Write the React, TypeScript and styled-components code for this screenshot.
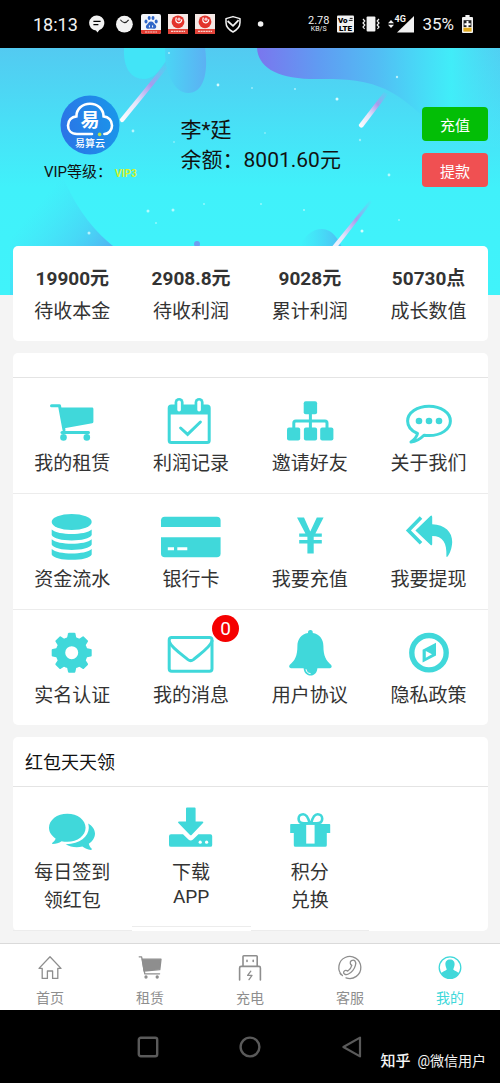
import React from 'react';
import styled, { createGlobalStyle } from 'styled-components';

const TEAL = '#40d8da';
const GREY = '#8e8e8e';

const GlobalStyle = createGlobalStyle`
  *, *::before, *::after { box-sizing: border-box; }
  body {
    margin: 0;
    background: #f4f4f4;
    color: #333;
    font-family: Roboto, "Noto Sans CJK SC", sans-serif;
  }
  a { color: inherit; text-decoration: none; }
  svg { display: block; flex: none; overflow: visible; }
`;

const Page = styled.div`
  display: flex;
  flex-direction: column;
  min-height: 100vh;
`;

/* ---------- status bar ---------- */

const StatusBar = styled.div`
  display: flex;
  align-items: center;
  justify-content: space-between;
  height: 48px;
  padding: 0 27px 0 33px;
  background: #000;
  color: #f2f2f2;
`;

const StatusLeft = styled.div`
  display: flex;
  align-items: center;
  gap: 7px;
`;

const StatusRight = styled.div`
  display: flex;
  align-items: center;
  gap: 8px;
`;

const Clock = styled.time`
  width: 47px;
  font-size: 18px;
`;

const Battery = styled.span`
  font-size: 17px;
`;

const Speed = styled.span`
  display: flex;
  flex-direction: column;
  align-items: center;
  font-size: 11px;
  line-height: 10px;
`;

const SpeedUnit = styled.small`
  font-size: 7px;
  line-height: 7px;
`;

/* ---------- profile ---------- */

const Hero = styled.header`
  position: relative;
  height: 247px;
  background: linear-gradient(#53caf1 0, #47e2f7 84px, #40f1fa 140px, #40f3fa 100%);
  overflow: hidden;
`;

const Backdrop = styled.svg`
  position: absolute;
  inset: 0;
  width: 100%;
  height: 100%;
`;

const Profile = styled.div`
  position: relative;
  display: flex;
  padding-right: 12px;
  color: #111;
`;

const Member = styled.div`
  display: flex;
  flex-direction: column;
  align-items: center;
  gap: 5px;
  width: 37%;
  padding-top: 47px;
`;

const Level = styled.div`
  font-size: 15px;
`;

const LevelValue = styled.strong`
  margin-left: 3px;
  color: #d5f32c;
  font-size: 10px;
`;

const Account = styled.div`
  flex: 1;
  padding-top: 67px;
  font-size: 21px;
  line-height: 30px;
`;

const Actions = styled.div`
  display: flex;
  flex-direction: column;
  gap: 12px;
  padding-top: 59px;
`;

const ActionButton = styled.button<{ $color: string }>`
  width: 66px;
  height: 34px;
  padding: 0;
  border: 0;
  border-radius: 4px;
  background: ${(p) => p.$color};
  color: #fff;
  font: inherit;
  font-size: 15px;
`;

/* ---------- cards ---------- */

const Main = styled.main`
  display: flex;
  flex: 1;
  flex-direction: column;
  gap: 12px;
  margin-top: -49px;
  padding: 0 12px 12px 13px;
`;

const Card = styled.section`
  border-radius: 5px;
  background: #fff;
  z-index: 1;
`;

const Stats = styled.dl`
  display: grid;
  grid-template-columns: repeat(4, 1fr);
  margin: 0;
  padding: 19px 0 15px;
  font-size: 19px;
  line-height: 28px;
  text-align: center;
`;

const Stat = styled.div`
  display: flex;
  flex-direction: column-reverse;
  gap: 5px;
`;

const StatName = styled.dt``;

const StatValue = styled.dd`
  margin: 0;
  font-weight: 700;
`;

const CardHead = styled.h2<{ $empty?: boolean }>`
  height: ${(p) => (p.$empty ? '25px' : '50px')};
  margin: 0;
  padding: 0 12px;
  border-bottom: 1px solid #e4e4e4;
  color: #111;
  font-size: 18px;
  font-weight: 400;
  line-height: 52px;
`;

const Grid = styled.div`
  display: grid;
  grid-template-columns: repeat(4, 1fr);
  align-items: start;
`;

const Item = styled.a`
  display: flex;
  flex-direction: column;
  align-items: center;
  padding: 19px 0 18px;
  border-bottom: 1px solid #ececec;
  font-size: 19px;
  text-align: center;
`;

const ServiceCard = styled(Card)`
  ${Item}:nth-last-child(-n + 4) { border-bottom: 0; }
`;

const Picture = styled.span`
  position: relative;
  height: 50px;
`;

const Badge = styled.span`
  position: absolute;
  top: -14px;
  right: -18px;
  width: 27px;
  height: 27px;
  border-radius: 50%;
  background: #f50000;
  color: #fff;
  font-size: 19px;
  line-height: 27px;
`;

const ItemLine = styled.span`
  display: block;
  padding-top: 1px;
`;

const Line = styled.span`
  display: block;
`;

/* ---------- bottom bars ---------- */

const TabBar = styled.nav`
  display: grid;
  grid-template-columns: repeat(5, 1fr);
  height: 67px;
  border-top: 1px solid #dadada;
  background: #fff;
`;

const Tab = styled.a<{ $active?: boolean }>`
  && { color: ${(p) => (p.$active ? TEAL : GREY)}; }
  display: flex;
  flex-direction: column;
  align-items: center;
  gap: 7px;
  padding-top: 11px;
  font-size: 14px;
  line-height: 20px;
`;

const SystemBar = styled.footer`
  position: relative;
  display: flex;
  align-items: center;
  justify-content: center;
  gap: 80px;
  height: 73px;
  background: #000;
`;

const SystemButton = styled.button`
  width: 22px;
  height: 22px;
  padding: 0;
  border: 0;
  background: none;
`;

const Watermark = styled.span`
  position: absolute;
  right: 14px;
  bottom: 11px;
  color: #f4f4f4;
  font-size: 14px;
  line-height: 22px;
`;

const WatermarkBrand = styled.b`
  margin-right: 7px;
  font-size: 15px;
  font-weight: 500;
`;

/* ---------- drawings ---------- */

const Glyph = ({ children }: { children: React.ReactNode }) => (
  <svg width="60" height="50" viewBox="0 0 60 50" fill={TEAL} aria-hidden="true">{children}</svg>
);

const outline = { fill: 'none', stroke: TEAL, strokeWidth: 3, strokeLinejoin: 'round', strokeLinecap: 'round' } as const;

const CartIcon = () => (
  <Glyph>
    <path d="M9.5 8.8H17.5L22 33" {...outline} />
    <path d="M17.5 10.6H50.2Q51.4 10.6 51.4 12V24.8Q51.4 26 50.2 26.2L21 31.4Z" />
    <path d="M20 35.6H46.5" {...outline} />
    <circle cx="21.5" cy="40.4" r="3.3" />
    <circle cx="44.8" cy="40.4" r="3.3" />
  </Glyph>
);

const CalendarIcon = () => (
  <Glyph>
    <rect x="8.2" y="9" width="40" height="36.5" rx="2" {...outline} />
    <path d="M8 9H48V17.4H8Z" />
    <rect x="13.6" y="1" width="9" height="14.6" rx="4.5" />
    <rect x="33.6" y="1" width="9" height="14.6" rx="4.5" />
    <rect x="16.3" y="3.6" width="3.6" height="11" rx="1.8" fill="#fff" />
    <rect x="36.3" y="3.6" width="3.6" height="11" rx="1.8" fill="#fff" />
    <path d="M19.6 31L26.6 37.4L39.4 25" {...outline} strokeLinejoin="miter" />
  </Glyph>
);

const SitemapIcon = () => (
  <Glyph>
    <rect x="23.7" y="4.2" width="13.4" height="13" rx="2" />
    <rect x="7" y="30.4" width="13.2" height="13.2" rx="2" />
    <rect x="23.9" y="30.4" width="13.2" height="13.2" rx="2" />
    <rect x="40.2" y="30.4" width="13.2" height="13.2" rx="2" />
    <path d="M30.4 16V31M13.8 31V26Q13.8 24 15.8 24H45Q47 24 47 26V31" {...outline} />
  </Glyph>
);

const CommentIcon = () => (
  <Glyph>
    <path d="M18.5 36.5C12.5 34 8.6 29.5 8.6 24C8.6 15.8 18 9.2 30 9.2S51.4 15.8 51.4 24S42 38.6 30 38.6Q27.4 38.6 25 38.2C21.2 42 17 44.4 12 45C15.6 42.4 17.8 39.6 18.5 36.5Z" {...outline} />
    <circle cx="20" cy="24" r="3.3" />
    <circle cx="30" cy="24" r="3.3" />
    <circle cx="40" cy="24" r="3.3" />
  </Glyph>
);

const DatabaseIcon = () => (
  <Glyph>
    <ellipse cx="29.7" cy="9" rx="20" ry="8.1" />
    {[16.6, 26.2, 36].map((y) => (
      <path key={y} d={`M9.7 ${y}C16 ${y + 6} 43.4 ${y + 6} 49.7 ${y}v5.4C47 ${y + 12.6} 12.4 ${y + 12.6} 9.7 ${y + 5.4}Z`} />
    ))}
  </Glyph>
);

const BankCardIcon = () => (
  <Glyph>
    <path d="M0 14V7.6Q0 3.8 3.8 3.8H55.8Q59.6 3.8 59.6 7.6V14Z" />
    <path d="M0 24.3H59.6V40.4Q59.6 44.2 55.8 44.2H3.8Q0 44.2 0 40.4Z" />
    <path d="M6.8 34.3H13V37.3H6.8ZM16.3 34.3H26.3V37.3H16.3Z" fill="#fff" />
  </Glyph>
);

const YenIcon = () => (
  <Glyph>
    <path d="M17 4.4H24L30.3 18.6L36.8 4.4H43.6L35.4 20.4H41.8V23.7H33.7V27H41.8V30.4H33.7V40.4H27.4V30.4H19.2V27H27.4V23.7H19.2V20.4H25.4Z" />
  </Glyph>
);

const ReplyAllIcon = () => (
  <Glyph>
    <path d="M22 4.6L9.4 17.4L22 30.2" {...outline} strokeWidth="3.6" strokeLinecap="butt" strokeLinejoin="miter" />
    <path d="M16.4 17.4L31.4 3Q33.2 1.8 33.2 4.2V11.2C46 11.6 53.4 19 53.2 29C53 35 51 40.4 48.6 43.6Q47.4 44.4 47.4 43C48 30 44 23 33.2 23V30.8Q33.2 33.2 31.4 31.8Z" />
  </Glyph>
);

const GearIcon = () => (
  <Glyph>
    <circle cx="29.7" cy="23.7" r="11.2" fill="none" stroke={TEAL} strokeWidth="9.4" />
    {[0, 45, 90, 135, 180, 225, 270, 315].map((a) => (
      <path key={a} transform={`rotate(${a} 29.7 23.7)`} d="M24.7 10.6L26 4.6Q26.2 3.7 27 3.7H32.4Q33.2 3.7 33.4 4.6L34.7 10.6Z" />
    ))}
  </Glyph>
);

const MailIcon = () => (
  <Glyph>
    <rect x="8.2" y="8.6" width="42.8" height="33.6" rx="2.5" {...outline} />
    <path d="M8.4 13C10 18 20 25 27 30.6Q29.7 32.6 32.4 30.6C39 25 49.6 18 51 12" {...outline} />
  </Glyph>
);

const BellIcon = () => (
  <Glyph>
    <path d="M30.4 1C32 1 33 2.2 32.8 4C39.4 5.2 43.4 10 43.4 17C43.4 27 46 31.6 51.2 36Q52.6 38.6 50 39.3H37.4C37 43.6 34.6 46.6 30.6 46.6S24 43.6 23.6 39.3H11Q8.2 38.6 9.6 36C15 31.6 17.4 27 17.4 17C17.4 10 21.4 5.2 28 4C27.8 2.2 28.8 1 30.4 1Z" />
    <path d="M26 40.2C26.4 43 28 44.4 30.6 44.6" fill="none" stroke="#fff" strokeWidth="1" />
  </Glyph>
);

const CompassIcon = () => (
  <Glyph>
    <circle cx="30" cy="23.7" r="17.2" {...outline} strokeWidth="5.4" />
    <path fillRule="evenodd" d="M37 13.8V26.4L23.6 33.4V20.8ZM26.8 22V28.8L33 25.3Z" />
  </Glyph>
);

const ChatsIcon = () => (
  <Glyph>
    <path d="M25.3 7.8C35.6 7.8 43.6 14 43.6 21.8S35.6 35.8 25.3 35.8Q22 35.8 19.6 35.2C17 37 14 38 10.6 38Q9.4 37.8 10.4 36.8C12.2 35.4 13.2 34 13.6 32.4C9.6 30 7 26.2 7 21.8C7 14 15 7.8 25.3 7.8Z" />
    <path d="M46.2 17.4C50.4 19.8 53 23.4 53 27.6C53 31.6 50.6 35.4 46.8 37.8C47.2 39.6 48 41 49.6 42.6Q50.4 44 49 44C45.4 43.6 43 42.4 40.4 40.6C34 41.8 28.2 41 23.6 38.2C37.6 38.4 46.6 30.4 46.8 22Q46.8 19.6 46.2 17.4Z" />
  </Glyph>
);

const DownloadIcon = () => (
  <Glyph>
    <path d="M10 28.3H22L27.4 33.6Q29.7 35.6 32 33.6L37.4 28.3H49.4Q51.2 28.3 51.2 30.2V38.9Q51.2 40.8 49.4 40.8H10Q8 40.8 8 38.9V30.2Q8 28.3 10 28.3Z" />
    <path d="M26 1.6H33.6Q34.6 1.6 34.6 2.6V15.4H41.4Q43.2 15.6 42 17L30.8 28.8Q29.8 29.8 28.8 28.8L17.4 17Q16.2 15.6 18 15.4H25V2.6Q25 1.6 26 1.6Z" />
    <circle cx="39.2" cy="36.2" r="1.6" fill="#fff" />
    <circle cx="45.6" cy="36.2" r="1.6" fill="#fff" />
  </Glyph>
);

const GiftIcon = () => (
  <Glyph>
    <path d="M11 18H49.4Q50.2 18 50.2 18.8V27H46.8V39.2Q46.8 40.8 45.2 40.8H15.4Q13.8 40.8 13.8 39.2V27H10.2V18.8Q10.2 18 11 18Z" />
    <path d="M26.2 18.8H34.6V37.6H26.2Z" fill="#fff" />
    <path d="M29.6 17.2C28.4 12 26.4 8.2 23.2 8.2C20.4 8.2 18.6 10.2 18.6 12.8C18.6 16 21 17.4 24 17.4ZM31.2 17.2C32.4 12 34.4 8.2 37.6 8.2C40.4 8.2 42.2 10.2 42.2 12.8C42.2 16 39.8 17.4 36.8 17.4Z" {...outline} strokeWidth="2.6" />
  </Glyph>
);

const TabGlyph = ({ children }: { children: React.ReactNode }) => (
  <svg width="26" height="26" viewBox="0 0 26 26" fill="none" stroke="currentColor" strokeWidth="1.3" strokeLinejoin="round" strokeLinecap="round" aria-hidden="true">{children}</svg>
);

const HomeTabIcon = () => (
  <TabGlyph>
    <path d="M13 1.8L2 13.4H5.2V23.4H10.4V16H15.6V23.4H20.8V13.4H24Z" />
  </TabGlyph>
);

const CartTabIcon = () => (
  <TabGlyph>
    <path d="M2.2 1.8H4.6L7.8 18.8H22.6" />
    <path d="M5.4 4.2H24L22.8 14.6L7 16Z" fill="currentColor" />
    <circle cx="9" cy="22" r="1" fill="currentColor" />
    <circle cx="20.2" cy="22" r="1" fill="currentColor" />
  </TabGlyph>
);

const PowerTabIcon = () => (
  <TabGlyph>
    <path d="M2.6 25V13Q2.6 11.4 4.2 11.4H22Q23.4 11.4 23.4 13V25M6 11.4V1.6Q6 .8 6.8 .8H19.4Q20.2 .8 20.2 1.6V11.4" strokeWidth="1.6" />
    <path d="M10 5.2V6.4M16.2 5.2V6.4" strokeWidth="1.6" />
    <path d="M13.8 16.2L10.6 20.4H15L12 24.6" />
  </TabGlyph>
);

const PhoneTabIcon = () => (
  <TabGlyph>
    <path d="M5.4 20.6A11 11 0 1 1 9 22.8M3 18.2A11 11 0 0 0 4 19.6" />
    <path d="M14.4 5.6C17.4 4 19.6 6.6 18.4 10.4C17.4 14 14.6 17.4 11.4 19C8.4 20.4 5.8 18.6 6.8 16.6C7.8 15 9.6 15 10.6 16.2C12.8 15 14.2 12.8 14.8 10.4C13 9.4 12.6 6.8 14.4 5.6Z" />
  </TabGlyph>
);

const MeTabIcon = () => (
  <TabGlyph>
    <circle cx="13" cy="12.6" r="10.8" />
    <path d="M13 4.6C16 4.6 17.8 6.6 17.6 9.6C17.4 12 16.6 13.2 16.2 14.4C17.6 15.8 20.6 16.2 22 18.4Q18.6 23.4 13 23.4T4 18.4C5.4 16.2 8.4 15.8 9.8 14.4C9.4 13.2 8.6 12 8.4 9.6C8.2 6.6 10 4.6 13 4.6Z" fill="currentColor" stroke="none" />
  </TabGlyph>
);

const AvatarLogo = () => (
  <svg width="60" height="60" viewBox="0 0 60 60" role="img" aria-label="易算云">
    <defs>
      <linearGradient id="logo" x1="0" y1="0.6" x2="1" y2="0.4">
        <stop offset="0" stopColor="#2b74e6" />
        <stop offset="1" stopColor="#1a96ea" />
      </linearGradient>
    </defs>
    <circle cx="30" cy="30" r="29.5" fill="url(#logo)" />
    <path d="M32 39H17C11 39 8 35 8 30.4C8 25.4 11.6 21.8 16.4 21.4C16.4 14 22.4 8.8 30 8.8S43.4 14 43.6 21.4C48.4 21.8 52 25.4 52 30.4C52 35 49 39 44.4 39" fill="none" stroke="#fff" strokeWidth="2.6" strokeLinecap="round" />
    <circle cx="39.6" cy="39.4" r="1.8" fill="#b6e24a" />
    <text x="30" y="32" textAnchor="middle" fill="#fff" fontSize="19" fontWeight="700">易</text>
    <text x="30" y="52" textAnchor="middle" fill="#fff" fontSize="10" fontWeight="500">易算云</text>
  </svg>
);

const stars: [number, number, number, number][] = [
  [169, 5, 1, 0.6], [218, 37, 1.4, 0.9], [133, 83, 1.4, 0.7], [174, 94, 1, 0.4], [148, 163, 1.5, 0.7],
  [173, 162, 1.5, 0.7], [156, 175, 1, 0.5], [204, 156, 1, 0.5], [89, 185, 1.5, 0.7], [337, 51, 1.5, 0.9],
  [295, 41, 1, 0.6], [252, 40, 1, 0.5], [397, 29, 1.2, 0.7], [360, 92, 1.2, 0.5], [389, 127, 1.4, 0.7],
  [304, 162, 1, 0.6], [261, 156, 1, 0.5], [362, 183, 1.5, 0.9], [399, 172, 1, 0.5], [265, 85, 1, 0.4],
];

const HeroBackdrop = () => (
  <Backdrop viewBox="0 0 500 247" preserveAspectRatio="none" aria-hidden="true">
    <defs>
      <linearGradient id="wave">
        <stop offset="0" stopColor="#7a76ee" />
        <stop offset="0.25" stopColor="#609bf2" />
        <stop offset="0.5" stopColor="#52bdf4" />
        <stop offset="0.8" stopColor="#3ff0f9" stopOpacity="0.9" />
        <stop offset="1" stopColor="#48e6f8" stopOpacity="0.2" />
      </linearGradient>
      <linearGradient id="drop">
        <stop offset="0" stopColor="#4ad6f5" />
        <stop offset="1" stopColor="#5cb0f3" />
      </linearGradient>
      <linearGradient id="slope" gradientUnits="userSpaceOnUse" x1="52" y1="140" x2="118" y2="196">
        <stop offset="0" stopColor="#4bd4f6" stopOpacity="0" />
        <stop offset="0.6" stopColor="#4cc6f4" stopOpacity="0.6" />
        <stop offset="1" stopColor="#55a8f0" stopOpacity="0.9" />
      </linearGradient>
      <linearGradient id="hill">
        <stop offset="0.1" stopColor="#4bc4f4" stopOpacity="0" />
        <stop offset="1" stopColor="#55a8f0" stopOpacity="0.8" />
      </linearGradient>
      <linearGradient id="streak" x1="0" y1="1" x2="1" y2="0">
        <stop offset="0" stopColor="#fff" />
        <stop offset="0.35" stopColor="#e2e4fa" />
        <stop offset="0.65" stopColor="#a99aec" />
        <stop offset="1" stopColor="#7fb6f2" stopOpacity="0" />
      </linearGradient>
    </defs>
    <path d="M124 0C123 20 131 31 144 31C158 31 163 14 176 0Z" fill="#42e4f7" />
    <path d="M165 0C164 24 174 45 188 45C202 45 209 28 205 0Z" fill="url(#drop)" />
    <path d="M257 0C258 18 275 30 310 31C344 31 362 31 385 41C412 54 420 70 450 86Q476 98 500 100V0Z" fill="url(#wave)" />
    <path d="M10 247V80C44 90 54 112 66 136C78 162 94 184 118 202L160 247Z" fill="url(#slope)" />
    <path d="M296 204C304 188 312 181 322 181C332 181 338 190 344 204Z" fill="url(#hill)" />
    <path d="M119.6 71.4L164 17L168 19L123.6 73.6Q121 75.4 119.6 71.4Z" fill="url(#streak)" />
    <path d="M358.6 77L384 44L388 46L363 79Q360 81 358.6 77Z" fill="url(#streak)" />
    <path d="M326 206L370 152L372 154L332 206Z" fill="url(#streak)" />
    <circle cx="197" cy="196" r="3" fill="#6e9df0" />
    {stars.map(([x, y, r, o]) => (
      <circle key={`${x}-${y}`} cx={x} cy={y} r={r} fill="#e6ffff" opacity={o} />
    ))}
  </Backdrop>
);

const RedAppIcon = () => (
  <svg width="20" height="20" viewBox="0 0 20 20" aria-hidden="true">
    <path d="M0 0H20V20H0Z" fill="#f6e9e6" />
    <circle cx="10" cy="7.8" r="6.4" fill="#e3342c" />
    <path d="M8.4 3.4Q6.6 7.4 10 8.8Q13.4 9 13.8 5.4" fill="none" stroke="#fff" strokeWidth="1.2" />
    <circle cx="11" cy="5.2" r="1.6" fill="#f6c9d2" />
    <path d="M0 15H20V20H0Z" fill="#e2443a" />
    <path d="M3 17.4H17" stroke="#f8cfc9" strokeWidth="1.2" strokeDasharray="2 0.6" />
  </svg>
);

/* ---------- data ---------- */

const stats = [
  ['19900元', '待收本金'],
  ['2908.8元', '待收利润'],
  ['9028元', '累计利润'],
  ['50730点', '成长数值'],
];

const services: { label: string; icon: React.FC; count?: number }[] = [
  { label: '我的租赁', icon: CartIcon },
  { label: '利润记录', icon: CalendarIcon },
  { label: '邀请好友', icon: SitemapIcon },
  { label: '关于我们', icon: CommentIcon },
  { label: '资金流水', icon: DatabaseIcon },
  { label: '银行卡', icon: BankCardIcon },
  { label: '我要充值', icon: YenIcon },
  { label: '我要提现', icon: ReplyAllIcon },
  { label: '实名认证', icon: GearIcon },
  { label: '我的消息', icon: MailIcon, count: 0 },
  { label: '用户协议', icon: BellIcon },
  { label: '隐私政策', icon: CompassIcon },
];

const rewards: { lines: string[]; icon: React.FC }[] = [
  { lines: ['每日签到', '领红包'], icon: ChatsIcon },
  { lines: ['下载', 'APP'], icon: DownloadIcon },
  { lines: ['积分', '兑换'], icon: GiftIcon },
];

const tabs: { label: string; icon: React.FC; active?: boolean }[] = [
  { label: '首页', icon: HomeTabIcon },
  { label: '租赁', icon: CartTabIcon },
  { label: '充电', icon: PowerTabIcon },
  { label: '客服', icon: PhoneTabIcon },
  { label: '我的', icon: MeTabIcon, active: true },
];

export default function App() {
  return (
    <Page>
      <GlobalStyle />
      <StatusBar>
        <StatusLeft>
          <Clock>18:13</Clock>
          <svg width="20" height="20" viewBox="0 0 20 20" aria-hidden="true">
            <path d="M10 1.6A7.4 7.4 0 0 1 12.4 16L10.4 18.4L9 16.4A7.4 7.4 0 0 1 10 1.6Z" fill="#f2f2f2" />
            <path d="M6.4 7.4H13.6M6.4 10.6H11.4" stroke="#000" strokeWidth="1.3" />
          </svg>
          <svg width="20" height="20" viewBox="0 0 20 20" aria-hidden="true">
            <circle cx="10.4" cy="10.2" r="8.4" fill="#f2f2f2" />
            <path d="M6.4 5.8Q10.4 11.4 14.6 5.8" fill="none" stroke="#222" strokeWidth="1.1" />
          </svg>
          <svg width="20" height="20" viewBox="0 0 20 20" aria-hidden="true">
            <rect width="20" height="20" rx="2" fill="#f4f6fa" />
            <g fill="#2f66c8">
              <ellipse cx="5" cy="7.4" rx="1.5" ry="2" />
              <ellipse cx="8.2" cy="4" rx="1.5" ry="2.1" />
              <ellipse cx="12" cy="4" rx="1.5" ry="2.1" />
              <ellipse cx="15.2" cy="7.4" rx="1.5" ry="2" />
              <path d="M10 7.4C12.4 7.4 13 9.6 14.6 11C16 12.6 15 15 12.8 14.8Q10 14.2 7.4 14.8C5 15 4.2 12.6 5.6 11C7.2 9.6 7.6 7.4 10 7.4Z" />
            </g>
            <path d="M8.4 11.4V13.4M11.6 11.4V13.4" stroke="#fff" />
            <path d="M0 16H20V18Q20 20 18 20H2Q0 20 0 18Z" fill="#e23a30" />
            <path d="M4 18H16" stroke="#f8cfc9" strokeWidth="1.2" strokeDasharray="2 0.6" />
          </svg>
          <RedAppIcon />
          <RedAppIcon />
          <svg width="20" height="20" viewBox="0 0 20 20" fill="none" stroke="#f2f2f2" strokeWidth="1.5" strokeLinejoin="round" aria-hidden="true">
            <path d="M11 2.6L18 4.6V8.6C18 13 15 16 11 18C7 16 4 13 4 8.6V4.6Z" />
            <path d="M5.6 7L11 11.8L16.6 6.2" strokeWidth="1.8" />
          </svg>
          <svg width="20" height="20" viewBox="0 0 20 20" aria-hidden="true">
            <circle cx="11.6" cy="10" r="2.8" fill="#f2f2f2" />
          </svg>
        </StatusLeft>
        <StatusRight>
          <Speed>2.78<SpeedUnit>KB/S</SpeedUnit></Speed>
          <svg width="17" height="18" viewBox="0 0 17 18" role="img" aria-label="VoLTE">
            <rect y="0.5" width="17" height="17" rx="1" fill="#f2f2f2" />
            <text x="1" y="8.4" fontSize="8" fontWeight="900">Vo</text>
            <path d="M11.8 5.4H15.6M12.8 3.4H15.6" stroke="#000" strokeWidth="0.9" />
            <text x="8.5" y="16" fontSize="8" fontWeight="900" textAnchor="middle">LTE</text>
          </svg>
          <svg width="18" height="18" viewBox="0 0 18 18" fill="none" stroke="#f2f2f2" strokeWidth="1.2" aria-hidden="true">
            <rect x="4.6" y="1.6" width="8.8" height="14.8" rx="1" fill="#f2f2f2" stroke="none" />
            <path d="M1 4L2.8 6L1 8L2.8 10L1 12L2.6 14M17 4L15.2 6L17 8L15.2 10L17 12L15.4 14" />
          </svg>
          <svg width="26" height="18" viewBox="0 0 26 18" fill="#f2f2f2" aria-hidden="true">
            <path d="M3 5L6 8.2H0ZM3 13L0 9.8H6Z" />
            <path d="M26 1V17.4H9Z" />
            <text x="6.6" y="6.8" fontSize="9" fontWeight="700" stroke="#000" strokeWidth="2" paintOrder="stroke">4G</text>
          </svg>
          <Battery>35%</Battery>
          <svg width="11" height="18" viewBox="0 0 11 18" aria-hidden="true">
            <path d="M3.4 0H7.6V2H10Q11 2 11 3V17Q11 18 10 18H1Q0 18 0 17V3Q0 2 1 2H3.4Z" fill="#f2f2f2" />
            <path d="M1.4 12.6H9.6V16.6H1.4Z" fill="#e0a91c" />
            <path d="M1.6 5.2H9.4V12H1.6Z" fill="#222" />
            <path d="M5.5 6V12.4M2.4 9.2H8.6" stroke="#fff" strokeWidth="2" />
          </svg>
        </StatusRight>
      </StatusBar>

      <Hero>
        <HeroBackdrop />
        <Profile>
          <Member>
            <AvatarLogo />
            <Level>VIP等级：<LevelValue>VIP3</LevelValue></Level>
          </Member>
          <Account>
            <Line>李*廷</Line>
            <Line>余额：8001.60元</Line>
          </Account>
          <Actions>
            <ActionButton type="button" $color="#03be06">充值</ActionButton>
            <ActionButton type="button" $color="#f05052">提款</ActionButton>
          </Actions>
        </Profile>
      </Hero>

      <Main>
        <Card>
          <Stats>
            {stats.map(([value, name]) => (
              <Stat key={name}>
                <StatName>{name}</StatName>
                <StatValue>{value}</StatValue>
              </Stat>
            ))}
          </Stats>
        </Card>

        <ServiceCard>
          <CardHead $empty as="div" />
          <Grid>
            {services.map(({ label, icon: Icon, count }) => (
              <Item key={label} href="#">
                <Picture>
                  <Icon />
                  {count !== undefined && <Badge>{count}</Badge>}
                </Picture>
                <ItemLine>{label}</ItemLine>
              </Item>
            ))}
          </Grid>
        </ServiceCard>

        <Card>
          <CardHead>红包天天领</CardHead>
          <Grid>
            {rewards.map(({ lines, icon: Icon }) => (
              <Item key={lines[0]} href="#">
                <Picture><Icon /></Picture>
                {lines.map((line) => <ItemLine key={line}>{line}</ItemLine>)}
              </Item>
            ))}
          </Grid>
        </Card>
      </Main>

      <TabBar>
        {tabs.map(({ label, icon: Icon, active }) => (
          <Tab key={label} href="#" $active={active}>
            <Icon />
            {label}
          </Tab>
        ))}
      </TabBar>

      <SystemBar>
        <SystemButton type="button" aria-label="最近任务">
          <svg width="22" height="22" viewBox="0 0 22 22" fill="none" stroke="#5a5a5a" strokeWidth="2.4">
            <rect x="1.8" y="1.8" width="18.4" height="18.4" rx="2" />
          </svg>
        </SystemButton>
        <SystemButton type="button" aria-label="主屏幕">
          <svg width="22" height="22" viewBox="0 0 22 22" fill="none" stroke="#5a5a5a" strokeWidth="2.4">
            <circle cx="11" cy="11" r="9.4" />
          </svg>
        </SystemButton>
        <SystemButton type="button" aria-label="返回">
          <svg width="22" height="22" viewBox="0 0 22 22" fill="none" stroke="#5a5a5a" strokeWidth="2.2" strokeLinejoin="round">
            <path d="M19 1.6V20.4L2.4 11Z" />
          </svg>
        </SystemButton>
        <Watermark><WatermarkBrand>知乎</WatermarkBrand>@微信用户</Watermark>
      </SystemBar>
    </Page>
  );
}
